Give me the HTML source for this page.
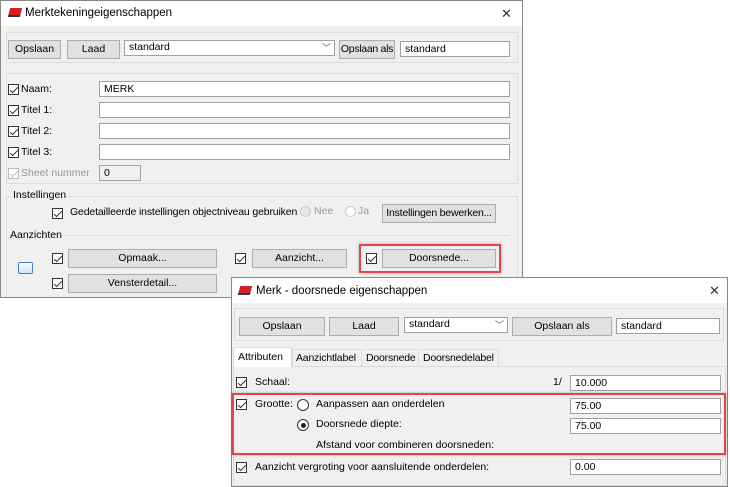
<!DOCTYPE html>
<html><head><meta charset="utf-8"><style>
*{box-sizing:border-box;margin:0;padding:0}
body{width:730px;height:479px;background:#fff;position:relative;overflow:hidden;font-family:"Liberation Sans",sans-serif;font-size:10.5px;color:#000}
.a{position:absolute}
.btn{position:absolute;background:#e1e1e1;border:1px solid #adadad;text-align:center;line-height:17px;font-size:10.5px;white-space:nowrap;overflow:hidden}
.fld{position:absolute;background:#fff;border:1px solid #a0a0a0;padding-left:4px;line-height:14px;font-size:10.5px;white-space:nowrap}
.cb{position:absolute;width:11px;height:11px;border:1px solid #333;background:#fff}
.cb::after{content:"";position:absolute;left:3px;top:0px;width:3px;height:7px;border:solid #333;border-width:0 1.3px 1.3px 0;transform:rotate(45deg)}
.cb.dis{border-color:#bbb}.cb.dis::after{border-color:#bbb}
.t{position:absolute;white-space:nowrap;line-height:13px}
.grp{position:absolute;border:1px solid #dcdcdc}
.ic{position:absolute;width:12px;height:9px;background:#d32027;transform:skewX(-15deg);border-bottom:2px solid #335}
.x{position:absolute;font-size:13px;color:#333;line-height:13px}
</style></head><body>
<!-- main dialog -->
<div class="a" style="left:0;top:0;width:523px;height:298px;border:1px solid #888;background:#f0f0f0;overflow:hidden">
<div class="grp" style="left:5px;top:195px;width:512px;height:120px"></div>
</div>
<div class="a" style="left:1px;top:1px;width:521px;height:25px;background:#fff"></div>
<div class="ic" style="left:9px;top:8px"></div>
<div class="t" style="left:25px;top:7px;font-size:11.5px">Merktekeningeigenschappen</div>
<div class="x" style="left:501px;top:7px">✕</div>
<div class="grp" style="left:6px;top:32px;width:512px;height:31px"></div>
<div class="btn" style="left:8px;top:40px;width:53px;height:19px">Opslaan</div>
<div class="btn" style="left:67px;top:40px;width:53px;height:19px">Laad</div>
<div class="fld" style="left:124px;top:40px;width:211px;height:16px;line-height:12px">standard<span style="position:absolute;right:3px;top:1px;font-size:9px;color:#555">﹀</span></div>
<div class="btn" style="left:339px;top:40px;width:56px;height:19px;letter-spacing:-0.3px">Opslaan als</div>
<div class="fld" style="left:400px;top:41px;width:110px;height:16px">standard</div>
<div class="grp" style="left:6px;top:73px;width:512px;height:111px"></div>
<div class="cb" style="left:8px;top:84px"></div><div class="t" style="left:21px;top:83px">Naam:</div>
<div class="fld" style="left:99px;top:81px;width:411px;height:16px">MERK</div>
<div class="cb" style="left:8px;top:105px"></div><div class="t" style="left:21px;top:104px">Titel 1:</div>
<div class="fld" style="left:99px;top:102px;width:411px;height:16px"></div>
<div class="cb" style="left:8px;top:126px"></div><div class="t" style="left:21px;top:125px">Titel 2:</div>
<div class="fld" style="left:99px;top:123px;width:411px;height:16px"></div>
<div class="cb" style="left:8px;top:147px"></div><div class="t" style="left:21px;top:146px">Titel 3:</div>
<div class="fld" style="left:99px;top:144px;width:411px;height:16px"></div>
<div class="cb dis" style="left:8px;top:168px"></div><div class="t" style="left:21px;top:167px;color:#999">Sheet nummer</div>
<div class="fld" style="left:99px;top:165px;width:42px;height:16px;background:#f0f0f0">0</div>
<div class="t" style="left:11px;top:189px;background:#f0f0f0;padding:0 2px">Instellingen</div>
<div class="cb" style="left:52px;top:208px"></div>
<div class="t" style="left:70px;top:206px;letter-spacing:-0.15px">Gedetailleerde instellingen objectniveau gebruiken</div>
<div class="a" style="left:300px;top:206px;width:11px;height:11px;border:1px solid #ccc;border-radius:50%;background:#e8e8e8"></div>
<div class="t" style="left:314px;top:205px;color:#999">Nee</div>
<div class="a" style="left:345px;top:206px;width:11px;height:11px;border:1px solid #ccc;border-radius:50%;background:#fff"></div>
<div class="t" style="left:358px;top:205px;color:#999">Ja</div>
<div class="btn" style="left:382px;top:204px;width:114px;height:19px;letter-spacing:-0.2px">Instellingen bewerken...</div>
<div class="a" style="left:65px;top:235px;width:445px;height:1px;background:#dcdcdc"></div>
<div class="t" style="left:9px;top:229px;background:#f0f0f0;padding:0 1px">Aanzichten</div>
<div class="a" style="left:18px;top:262px;width:15px;height:12px;border:1.5px solid #3b7ed6;border-radius:2px;background:linear-gradient(#fff,#cfe2f8)"></div>
<div class="cb" style="left:52px;top:253px"></div>
<div class="btn" style="left:68px;top:249px;width:149px;height:19px">Opmaak...</div>
<div class="cb" style="left:235px;top:253px"></div>
<div class="btn" style="left:252px;top:249px;width:95px;height:19px">Aanzicht...</div>
<div class="a" style="left:359px;top:244px;width:142px;height:29px;border:2px solid #e0474c;box-shadow:0 0 3px rgba(0,0,0,.3)"></div>
<div class="cb" style="left:366px;top:253px"></div>
<div class="btn" style="left:382px;top:249px;width:114px;height:19px">Doorsnede...</div>
<div class="cb" style="left:52px;top:278px"></div>
<div class="btn" style="left:68px;top:274px;width:149px;height:19px">Vensterdetail...</div>
<!-- second dialog -->
<div class="a" style="left:231px;top:277px;width:497px;height:210px;border:1px solid #888;background:#f0f0f0"></div>
<div class="a" style="left:232px;top:278px;width:495px;height:25px;background:#fff"></div>
<div class="ic" style="left:239px;top:286px"></div>
<div class="t" style="left:256px;top:285px;font-size:11.5px">Merk - doorsnede eigenschappen</div>
<div class="x" style="left:709px;top:284px">✕</div>
<div class="grp" style="left:234px;top:308px;width:490px;height:33px"></div>
<div class="btn" style="left:239px;top:317px;width:86px;height:19px">Opslaan</div>
<div class="btn" style="left:329px;top:317px;width:70px;height:19px">Laad</div>
<div class="fld" style="left:404px;top:317px;width:104px;height:16px;line-height:12px">standard<span style="position:absolute;right:3px;top:1px;font-size:9px;color:#555">﹀</span></div>
<div class="btn" style="left:512px;top:317px;width:100px;height:19px">Opslaan als</div>
<div class="fld" style="left:616px;top:318px;width:104px;height:16px">standard</div>
<div class="a" style="left:233px;top:366px;width:493px;height:120px;border:1px solid #dcdcdc;background:#f0f0f0"></div>
<div class="a" style="left:233px;top:347px;width:59px;height:20px;background:#fff;border:1px solid #dcdcdc;border-bottom:none"></div>
<div class="t" style="left:238px;top:351px">Attributen</div>
<div class="a" style="left:292px;top:349px;width:207px;height:18px;border:1px solid #dcdcdc;border-bottom:none"></div>
<div class="a" style="left:361px;top:349px;width:1px;height:18px;background:#dcdcdc"></div>
<div class="a" style="left:418px;top:349px;width:1px;height:18px;background:#dcdcdc"></div>
<div class="t" style="left:296px;top:352px;letter-spacing:-0.2px">Aanzichtlabel</div>
<div class="t" style="left:366px;top:352px;letter-spacing:-0.2px">Doorsnede</div>
<div class="t" style="left:423px;top:352px;letter-spacing:-0.2px">Doorsnedelabel</div>
<div class="cb" style="left:236px;top:377px"></div><div class="t" style="left:255px;top:376px">Schaal:</div>
<div class="t" style="left:553px;top:376px">1/</div>
<div class="fld" style="left:570px;top:375px;width:151px;height:16px">10.000</div>
<div class="a" style="left:232px;top:393px;width:494px;height:62px;border:2px solid #e0474c;box-shadow:0 0 3px rgba(0,0,0,.3)"></div>
<div class="cb" style="left:236px;top:399px"></div><div class="t" style="left:255px;top:398px">Grootte:</div>
<div class="a" style="left:297px;top:399px;width:12px;height:12px;border:1px solid #333;border-radius:50%;background:#fff"></div>
<div class="t" style="left:316px;top:398px">Aanpassen aan onderdelen</div>
<div class="fld" style="left:570px;top:398px;width:151px;height:16px">75.00</div>
<div class="a" style="left:297px;top:419px;width:12px;height:12px;border:1px solid #333;border-radius:50%;background:#fff"><div style="position:absolute;left:2.5px;top:2.5px;width:5px;height:5px;border-radius:50%;background:#222"></div></div>
<div class="t" style="left:316px;top:418px">Doorsnede diepte:</div>
<div class="fld" style="left:570px;top:418px;width:151px;height:16px">75.00</div>
<div class="t" style="left:316px;top:439px">Afstand voor combineren doorsneden:</div>
<div class="cb" style="left:236px;top:462px"></div><div class="t" style="left:255px;top:461px">Aanzicht vergroting voor aansluitende onderdelen:</div>
<div class="fld" style="left:570px;top:459px;width:151px;height:16px">0.00</div>
</body></html>
